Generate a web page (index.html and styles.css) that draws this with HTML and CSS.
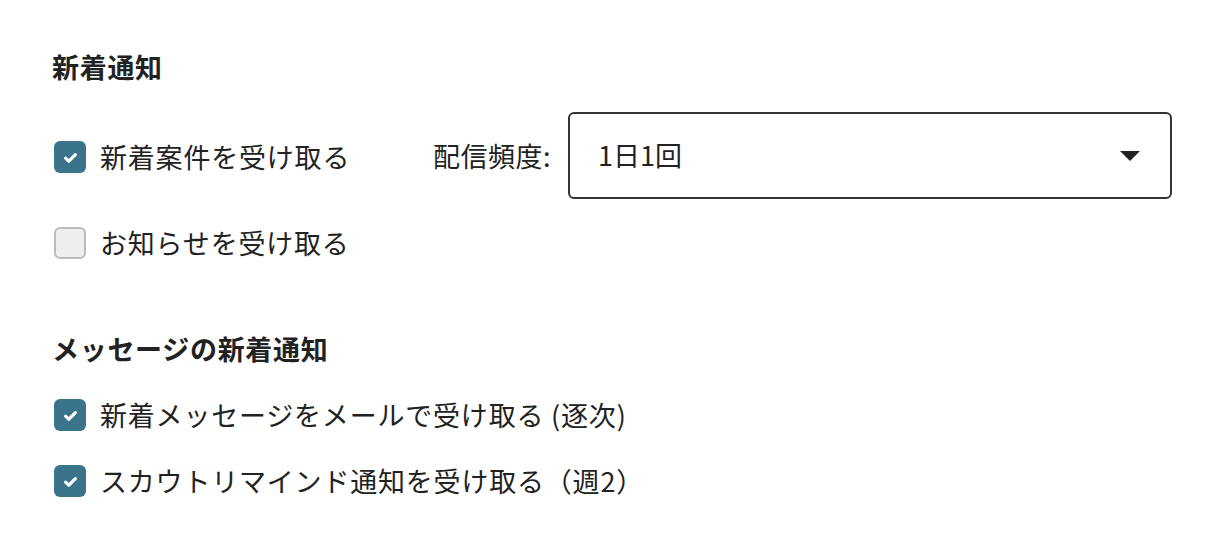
FILE: index.html
```html
<!DOCTYPE html>
<html lang="ja">
<head>
<meta charset="utf-8">
<link rel="stylesheet" href="styles.css">
</head>
<body>
<div class="page">
  <section class="group">
    <h2 class="heading">新着通知</h2>
    <div class="row row-select">
      <label class="check check-fixed">
        <span class="box checked"><svg viewBox="0 0 16 16" width="17" height="17"><path d="M3.4 8.6 L6.5 11.5 L12.6 5.3" fill="none" stroke="#fff" stroke-width="3" stroke-linecap="round" stroke-linejoin="round"/></svg></span>
        <span class="text">新着案件を受け取る</span>
      </label>
      <span class="field-label">配信頻度:</span>
      <div class="select">
        <span class="select-value">1日1回</span>
        <svg class="caret" viewBox="0 0 20 10" width="20" height="10"><path d="M0 0 H20 L10 10 Z" fill="#222"/></svg>
      </div>
    </div>
    <div class="row">
      <label class="check">
        <span class="box"></span>
        <span class="text">お知らせを受け取る</span>
      </label>
    </div>
  </section>
  <section class="group group2">
    <h2 class="heading">メッセージの新着通知</h2>
    <div class="row">
      <label class="check">
        <span class="box checked"><svg viewBox="0 0 16 16" width="17" height="17"><path d="M3.4 8.6 L6.5 11.5 L12.6 5.3" fill="none" stroke="#fff" stroke-width="3" stroke-linecap="round" stroke-linejoin="round"/></svg></span>
        <span class="text">新着メッセージをメールで受け取る (逐次)</span>
      </label>
    </div>
    <div class="row">
      <label class="check">
        <span class="box checked"><svg viewBox="0 0 16 16" width="17" height="17"><path d="M3.4 8.6 L6.5 11.5 L12.6 5.3" fill="none" stroke="#fff" stroke-width="3" stroke-linecap="round" stroke-linejoin="round"/></svg></span>
        <span class="text">スカウトリマインド通知を受け取る（週2）</span>
      </label>
    </div>
  </section>
</div>
</body>
</html>
```

FILE: styles.css
```css
* { box-sizing: border-box; }
html, body { margin: 0; padding: 0; background: #fff; }
body {
  font-family: "Noto Sans CJK JP", "Noto Sans", sans-serif;
  color: #222;
  font-size: 27px;
}
.page {
  padding: 49px 0 0 52px;
}
.heading {
  margin: 0;
  font-size: 27px;
  font-weight: 700;
  line-height: 36px;
  letter-spacing: 0.7px;
  color: #222;
}
.group {
  display: flex;
  flex-direction: column;
  gap: 26px;
}
.group2 {
  margin-top: 70px;
  gap: 30px;
}
.row {
  display: flex;
  align-items: center;
  min-height: 36px;
}
.check {
  display: flex;
  align-items: center;
  gap: 14px;
  padding-left: 2px;
}
.check-fixed {
  width: 381px;
  margin-top: 3px;
}
.row-select { margin-top: 1px; }
.box {
  width: 32px;
  height: 32px;
  flex: none;
  border-radius: 6px;
  background: #eee;
  border: 2px solid #bcbcbc;
  display: flex;
  align-items: center;
  justify-content: center;
}
.box.checked {
  background: #3a748b;
  border: none;
}
.box svg { display: block; }
.text {
  line-height: 36px;
  letter-spacing: 0.8px;
}
.field-label {
  margin-right: 17px;
  line-height: 36px;
  letter-spacing: 0.5px;
}
.select {
  width: 604px;
  height: 87px;
  border: 2px solid #333;
  border-radius: 6px;
  display: flex;
  align-items: center;
  justify-content: space-between;
  padding: 0 30px 0 28px;
}
.select-value { line-height: 36px; margin-top: -2px; }
.caret { display: block; }
```
